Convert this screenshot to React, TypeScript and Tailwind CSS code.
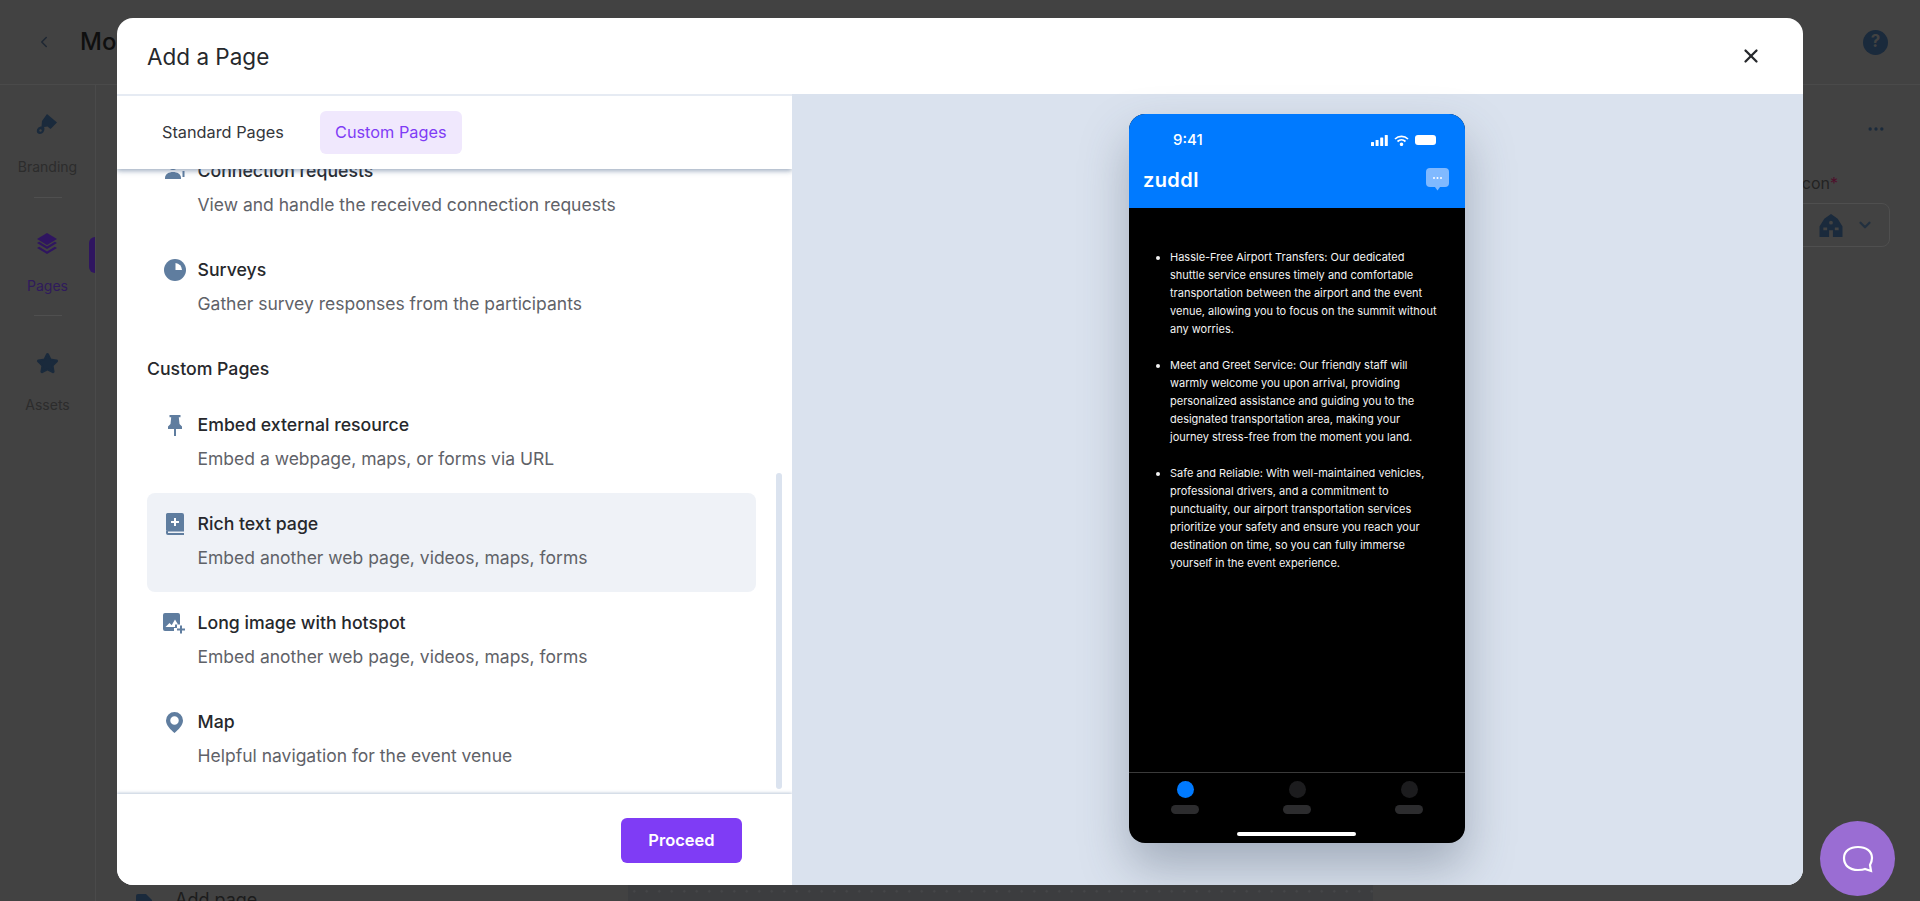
import { ChevronDown, ChevronLeft, MoreHorizontal, Star, X } from "lucide-react";

const font = "font-['Inter','Noto_Sans',sans-serif]";

const SLATE = "#5f7d9f";
const NAVY = "#1a2a3c";

const Row = ({ icon, title, desc, active }: { icon: React.ReactNode; title: string; desc: string; active?: boolean }) => (
  <div className={`h-[99px] rounded-lg flex items-start pt-[17px] pl-[14px] ${active ? "bg-[#eff2f7]" : ""}`}>
    <div className="w-[27px] h-[28px] flex items-center justify-center shrink-0">{icon}</div>
    <div className="ml-[9.500px]">
      <div className="text-[17.700px] leading-[28px] font-medium text-[#26282c]">{title}</div>
      <div className="text-[17.500px] leading-[28px] mt-[6px] text-[#5f6268]">{desc}</div>
    </div>
  </div>
);

const SurveyIcon = () => (
  <svg width="22" height="22" viewBox="0 0 22 22">
    <circle cx="11" cy="11" r="11" fill={SLATE} />
    <path d="M11.500 4a7 7 0 0 1 6.500 7h-6.500z" fill="#fff" />
  </svg>
);
const PersonIcon = () => (
  <svg width="22" height="22" viewBox="0 0 22 22" fill={SLATE}>
    <circle cx="9" cy="6" r="4" />
    <path d="M1 18c0-4 4-6 8-6s8 2 8 6v1H1z" />
    <path d="M18.500 11h2v6h-2z" />
  </svg>
);
const PinIcon = () => (
  <svg width="14" height="21" viewBox="0 0 14 21" fill={SLATE}>
    <path d="M1.500 0h11v2.200h-1.700l.7 6.800L14 11.500V14H8v7H6v-7H0v-2.500L2.500 9l.7-6.800H1.500z" />
  </svg>
);
const BookIcon = () => (
  <svg width="20" height="22" viewBox="0 0 20 22">
    <path d="M2.500 0H17a2 2 0 0 1 2 2v15H3a2 2 0 0 0-2 1V1.500A1.500 1.500 0 0 1 2.500 0z" fill={SLATE} />
    <path d="M1 18.500A1.500 1.500 0 0 1 2.500 17H19v1.500H3V20h16v2H3a2 2 0 0 1-2-2z" fill={SLATE} />
    <path d="M9 5h2v3h3v2h-3v3H9v-3H6V8h3z" fill="#fff" />
  </svg>
);
const ImagePlusIcon = () => (
  <svg width="23" height="21" viewBox="0 0 23 21">
    <path d="M2 0h13a2 2 0 0 1 2 2v9.500h-3V15h-3v3H2a2 2 0 0 1-2-2V2a2 2 0 0 1 2-2z" fill={SLATE} />
    <path d="M2.500 14l4-4 2.200 2.200L12 6.500l3 5h-3v2.500z" fill="#fff" />
    <path d="M17 12.500h2v3h3v2h-3v3h-2v-3h-3v-2h3z" fill={SLATE} />
  </svg>
);
const MapPinIcon = () => (
  <svg width="17" height="21" viewBox="0 0 18 22">
    <path fillRule="evenodd" d="M9 0a9 9 0 0 1 9 9c0 5-5 10-9 13-4-3-9-8-9-13a9 9 0 0 1 9-9zm0 4.500a4.500 4.500 0 1 0 0 9 4.500 4.500 0 0 0 0-9z" fill={SLATE} />
  </svg>
);
const BrushIcon = () => (
  <svg width="22" height="22" viewBox="0 0 22 22" fill={NAVY}>
    <path d="M11 0l10 8.500-6.500 6.500-3-2.500L8 13c.800 1.800.500 3.500-.500 5-1 1.600-3.600 2.600-5.500 1.500C.300 18.400.500 15.500 2 14c1-1 2.200-1.500 3.500-1.500L6 7z" />
    <circle cx="4.500" cy="16.500" r="1.200" fill="#424242" />
  </svg>
);
const LayersIcon = () => (
  <svg width="22" height="22" viewBox="0 0 22 22" fill="#2f1560">
    <path d="M11 0l10 6-10 6L1 6z" />
    <path d="M1 10l2.200-1.300L11 13.500l7.800-4.800L21 10l-10 6z" />
    <path d="M1 15l2.200-1.300L11 18.500l7.800-4.800L21 15l-10 6z" />
  </svg>
);

const paragraphs = [
  [
    "Hassle-Free Airport Transfers: Our dedicated",
    "shuttle service ensures timely and comfortable",
    "transportation between the airport and the event",
    "venue, allowing you to focus on the summit without",
    "any worries.",
  ],
  [
    "Meet and Greet Service: Our friendly staff will",
    "warmly welcome you upon arrival, providing",
    "personalized assistance and guiding you to the",
    "designated transportation area, making your",
    "journey stress-free from the moment you land.",
  ],
  [
    "Safe and Reliable: With well-maintained vehicles,",
    "professional drivers, and a commitment to",
    "punctuality, our airport transportation services",
    "prioritize your safety and ensure you reach your",
    "destination on time, so you can fully immerse",
    "yourself in the event experience.",
  ],
];

const SideItem = ({ icon, label, color }: { icon: React.ReactNode; label: string; color: string }) => (
  <div className="flex flex-col items-center">
    <div className="h-[24px] flex items-center">{icon}</div>
    <div className={`text-[14px] leading-[20px] mt-[20px] ${color}`}>{label}</div>
  </div>
);

export default function App() {
  return (
    <div className={`relative w-[1920px] h-[901px] overflow-hidden bg-[#424242] ${font}`}>
      {/* dimmed page behind the modal */}
      <div className="h-[85px] border-b border-[#4a4a4a] flex items-center pl-[35px] pr-[32px]">
        <ChevronLeft size={18} className="text-[#1e2733]" />
        <div className="ml-[27px] text-[24px] font-medium text-[#0f0f0f]">Mobile</div>
        <div className="ml-auto w-[25px] h-[25px] rounded-full bg-[#1a2a3c] text-[#424242] flex items-center justify-center text-[17px] font-bold">?</div>
      </div>
      <div className="flex h-[816px]">
        <div className="w-[96px] shrink-0 border-r border-[#4a4a4a] flex flex-col items-center pt-[28px] relative">
          <SideItem icon={<BrushIcon />} label="Branding" color="text-[#2c2c2c]" />
          <div className="w-[28px] h-px bg-[#4f4f4f] mt-[20px] mb-[34px]" />
          <SideItem icon={<LayersIcon />} label="Pages" color="text-[#2f1a5c]" />
          <div className="w-[28px] h-px bg-[#4f4f4f] mt-[19px] mb-[35px]" />
          <SideItem icon={<Star size={23} color={NAVY} fill={NAVY} />} label="Assets" color="text-[#2c2c2c]" />
          <div className="absolute right-0 top-[152px] w-[6px] h-[36px] rounded-l-md bg-[#2f1560]" />
        </div>
        <div className="w-[532px] shrink-0 flex flex-col justify-end pl-[40px]">
          <div className="flex items-start text-[18px] leading-[24px] text-[#1c1c1c] h-[24px] -mb-[11px]">
            <svg width="16" height="20" viewBox="0 0 16 20" fill={NAVY} className="mt-[6px]">
              <path d="M2 0h8l6 6v12a2 2 0 0 1-2 2H2a2 2 0 0 1-2-2V2a2 2 0 0 1 2-2z" />
            </svg>
            <span className="ml-[23px]">Add page</span>
          </div>
        </div>
        <div className="w-[745px] shrink-0 bg-[#3c3d3f] bg-[radial-gradient(#464749_1px,transparent_1px)] bg-[size:12.500px_12.500px]" />
        <div className="flex-1 pr-[30px] pt-[34px] flex flex-col items-end">
          <MoreHorizontal size={20} color={NAVY} className="mr-[4px]" />
          <div className="mt-[32px] mr-[52px] text-[16px] leading-[24px] text-[#232323]">Icon<span className="text-[#4f0f2b]">*</span></div>
          <div className="mt-[8px] w-[100px] h-[44px] rounded-lg border border-[#4f4f4f] flex items-center justify-end pr-[15px] gap-[12px] text-[#22303f]">
            <svg width="26" height="23" viewBox="0 0 26 24" fill={NAVY}>
              <path fillRule="evenodd" d="M13 0l7 5 5 8v11H1V13l5-8zM13 7a2 2 0 1 0 0 4 2 2 0 0 0 0-4zM5 14v3h4v-3zm12 0v3h4v-3zM11 17v7h4v-7z" />
            </svg>
            <ChevronDown size={18} strokeWidth={3} />
          </div>
        </div>
      </div>

      {/* modal */}
      <div className="absolute left-[117px] top-[18px] w-[1686px] h-[867px] bg-white rounded-2xl overflow-hidden flex flex-col">
        <div className="h-[76px] shrink-0 flex items-center justify-between pt-[2px] pl-[30px] pr-[41px]">
          <div className="text-[22.500px] text-[#26282c]">Add a Page</div>
          <X size={22} strokeWidth={2.500} className="text-[#26282c] -mt-[2px]" />
        </div>
        <div className="flex-1 min-h-0 flex">
          <div className="relative w-[675px] shrink-0 flex flex-col overflow-hidden">
            <div className="relative z-10 h-[75px] shrink-0 bg-white border-t-2 border-[#e6ebf3] flex items-center pl-[30px] gap-[21px] shadow-[0_2px_5px_rgba(80,105,140,0.55)]">
              <div className="px-[15px] h-[43px] flex items-center text-[16.300px] text-[#34363b]">Standard Pages</div>
              <div className="w-[142px] h-[43px] flex items-center justify-center rounded-md bg-[#f0e8fd] text-[16.300px] text-[#7f3cf5]">Custom Pages</div>
            </div>
            <div className="flex-1 min-h-0 overflow-hidden relative pl-[30px] pr-[36px]">
              <div className="-mt-[29px]">
                <Row icon={<PersonIcon />} title="Connection requests" desc="View and handle the received connection requests" />
                <Row icon={<SurveyIcon />} title="Surveys" desc="Gather survey responses from the participants" />
                <div className="h-[56px] pt-[17px] text-[17.700px] leading-[28px] font-medium text-[#26282c]">Custom Pages</div>
                <Row icon={<PinIcon />} title="Embed external resource" desc="Embed a webpage, maps, or forms via URL" />
                <Row active icon={<BookIcon />} title="Rich text page" desc="Embed another web page, videos, maps, forms" />
                <Row icon={<ImagePlusIcon />} title="Long image with hotspot" desc="Embed another web page, videos, maps, forms" />
                <Row icon={<MapPinIcon />} title="Map" desc="Helpful navigation for the event venue" />
              </div>
              <div className="absolute right-[10px] top-[304px] bottom-[5px] w-[6px] rounded-full bg-[#dbe3ef]" />
            </div>
            <div className="h-[91px] shrink-0 bg-white flex items-center justify-end pt-[2px] pr-[50px] shadow-[0_-1px_3px_rgba(90,120,160,0.4)] relative z-10">
              <button className="w-[121px] h-[45px] rounded-md bg-[#7f3cf5] text-white text-[16.500px] font-semibold">Proceed</button>
            </div>
          </div>
          <div className="flex-1 bg-[#dae2ee] flex justify-center pt-[20px] pr-[1px]">
            <div className="w-[336px] h-[729px] rounded-2xl bg-black overflow-hidden flex flex-col shadow-[0_24px_48px_rgba(60,75,95,0.35)] text-white">
              <div className="h-[94px] shrink-0 bg-[#007aff] flex flex-col">
                <div className="h-[52px] flex items-center justify-between pl-[44px] pr-[28px]">
                  <span className="text-[15px] font-medium">9:41</span>
                  <div className="flex items-center gap-[6px]">
                    <svg width="17" height="11" viewBox="0 0 17 11" fill="#fff"><rect x="0" y="7" width="3" height="4" rx="0.600" /><rect x="4.600" y="5" width="3" height="6" rx="0.600" /><rect x="9.200" y="2.500" width="3" height="8.500" rx="0.600" /><rect x="13.800" y="0" width="3" height="11" rx="0.600" /></svg>
                    <svg width="15" height="11" viewBox="0 0 15 11" fill="none" stroke="#fff" strokeWidth="1.700"><path d="M1 4a9.500 9.500 0 0 1 13 0M3.500 6.500a6 6 0 0 1 8 0" /><circle cx="7.500" cy="9.300" r="0.900" fill="#fff" /></svg>
                    <div className="w-[21px] h-[10px] rounded-[3px] bg-white mr-[1px]" />
                  </div>
                </div>
                <div className="flex items-start justify-between pl-[14px] pr-[16px]">
                  <div className="text-[20px] leading-[26px] font-semibold tracking-[0.4px] mt-[1px]">zuddl</div>
                  <svg width="23" height="24" viewBox="0 0 23 24" className="mt-[2px]">
                    <rect width="23" height="19" rx="4" fill="#80b9ff" />
                    <path d="M9 19h5l-2.500 3.500z" fill="#80b9ff" />
                    <circle cx="8" cy="10" r="1" fill="#fff" /><circle cx="11.500" cy="10" r="1" fill="#fff" /><circle cx="15" cy="10" r="1" fill="#fff" />
                  </svg>
                </div>
              </div>
              <ul className="flex-1 list-disc pl-[41px] pt-[40px] text-[11px] leading-[18px] text-[#f3f3f3]">
                {paragraphs.map((lines) => (
                  <li key={lines[0]} className="mb-[18px]">
                    {lines.map((l) => (
                      <span key={l} className="block whitespace-nowrap">{l}</span>
                    ))}
                  </li>
                ))}
              </ul>
              <div className="h-[71px] shrink-0 border-t border-[#3a3a3a] relative">
                <div className="flex justify-between pl-[42px] pr-[42px] pt-[8px]">
                  {["bg-[#007aff]", "bg-[#1c1c1e]", "bg-[#1c1c1e]"].map((c, i) => (
                    <div key={i} className="flex flex-col items-center w-[28px]">
                      <div className={`w-[17px] h-[17px] rounded-full ${c}`} />
                      <div className="w-[28px] h-[9px] rounded-full bg-[#2c2c2e] mt-[7px]" />
                    </div>
                  ))}
                </div>
                <div className="absolute left-[108px] bottom-[7px] w-[119px] h-[4px] rounded-full bg-white" />
              </div>
            </div>
          </div>
        </div>
      </div>

      {/* chat bubble */}
      <div className="absolute left-[1820px] top-[821px] w-[75px] h-[75px] rounded-full bg-[#9a6dd3] flex items-center justify-center">
        <svg width="32" height="28" viewBox="0 0 32 28" fill="none" stroke="#fff" strokeWidth="2.200">
          <path d="M16 2c8 0 14 4 14 11 0 3-1 5-2 7l1 6-6-2c-2 1-5 1-7 1C7 25 2 20 2 13S8 2 16 2z" />
        </svg>
      </div>
    </div>
  );
}
